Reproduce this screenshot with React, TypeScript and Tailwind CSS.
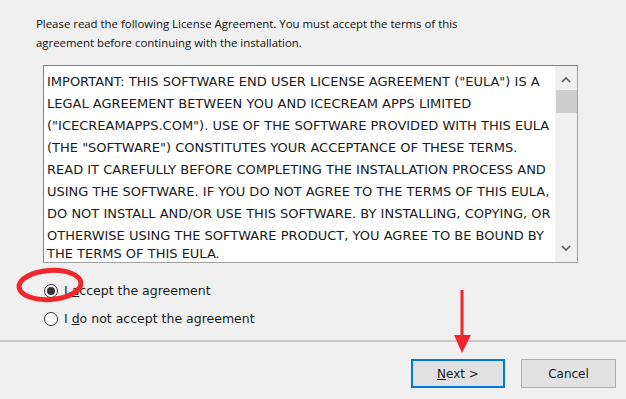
import React from 'react';

const eulaLines = [
  'IMPORTANT: THIS SOFTWARE END USER LICENSE AGREEMENT ("EULA") IS A',
  'LEGAL AGREEMENT BETWEEN YOU AND ICECREAM APPS LIMITED',
  '("ICECREAMAPPS.COM"). USE OF THE SOFTWARE PROVIDED WITH THIS EULA',
  '(THE "SOFTWARE") CONSTITUTES YOUR ACCEPTANCE OF THESE TERMS.',
  'READ IT CAREFULLY BEFORE COMPLETING THE INSTALLATION PROCESS AND',
  'USING THE SOFTWARE. IF YOU DO NOT AGREE TO THE TERMS OF THIS EULA,',
  'DO NOT INSTALL AND/OR USE THIS SOFTWARE. BY INSTALLING, COPYING, OR',
  'OTHERWISE USING THE SOFTWARE PRODUCT, YOU AGREE TO BE BOUND BY',
];

function Radio({ checked }: { checked?: boolean }) {
  return (
    <span className="w-[14px] h-[14px] rounded-full border border-[#333] bg-white flex items-center justify-center shrink-0">
      {checked && <span className="w-[8px] h-[8px] rounded-full bg-[#333]" />}
    </span>
  );
}

export default function App() {
  return (
    <div className="relative w-[626px] h-[399px] bg-[#f0f0f0] overflow-hidden text-[#1a1a1a]" style={{ fontFamily: '"DejaVu Sans", sans-serif' }}>
      <p className="pt-[14px] pl-[36px] text-[11.4px] leading-[19px] text-[#111] font-['Open_Sans',sans-serif]">
        Please read the following License Agreement. You must accept the terms of this<br />
        agreement before continuing with the installation.
      </p>

      <div className="ml-[43px] mt-[13px] w-[535px] h-[198px] flex border border-[#a0a0a0] border-t-[#828282] border-l-[#828282] bg-white">
        <div className="flex-1 pl-[3px] pt-[5px] text-[13px] leading-[22px] whitespace-nowrap overflow-hidden">
          {eulaLines.map((l, i) => (
            <div key={i}>{l}</div>
          ))}
          <div className="leading-[14px]">THE TERMS OF THIS EULA.</div>
        </div>
        <div className="w-[22px] bg-[#f0f0f0] flex flex-col items-center">
          <svg width="12" height="22" viewBox="0 0 12 22" className="mt-[2px]">
            <path d="M2 14 L6 10 L10 14" fill="none" stroke="#606060" strokeWidth="1.6" />
          </svg>
          <div className="w-[21px] h-[23px] bg-[#cdcdcd]" />
          <div className="flex-1" />
          <svg width="12" height="22" viewBox="0 0 12 22" className="mb-[2px]">
            <path d="M2 8 L6 12 L10 8" fill="none" stroke="#606060" strokeWidth="1.6" />
          </svg>
        </div>
      </div>

      <div className="ml-[44px] mt-[21px] flex flex-col gap-[14px] text-[12.5px] leading-[14px]">
        <label className="flex items-center gap-[6px]">
          <Radio checked />
          <span>I <span className="underline">a</span>ccept the agreement</span>
        </label>
        <label className="flex items-center gap-[6px]">
          <Radio />
          <span>I <span className="underline">d</span>o not accept the agreement</span>
        </label>
      </div>

      <div className="mt-[14px] h-[2px] bg-[#c8c8c8]" />

      <div className="flex justify-end gap-[16px] pr-[10px] mt-[17px] text-[12px]">
        <button className="w-[94px] h-[29px] bg-[#e1e1e1] border-2 border-[#0078d7] flex items-center justify-center">
          <span><span className="underline">N</span>ext &gt;</span>
        </button>
        <button className="w-[95px] h-[29px] bg-[#e1e1e1] border border-[#adadad] flex items-center justify-center">
          Cancel
        </button>
      </div>

      {/* annotation overlays */}
      <svg className="absolute left-0 top-0 pointer-events-none" width="626" height="399">
        <ellipse cx="50" cy="285" rx="31" ry="14.5" fill="none" stroke="#f0262b" strokeWidth="5" transform="rotate(-4 50 285)" />
        <line x1="462" y1="290" x2="462" y2="338" stroke="#f0262b" strokeWidth="3" />
        <path d="M454 335 L471 335 L462 353 Z" fill="#f0262b" />
      </svg>
    </div>
  );
}
